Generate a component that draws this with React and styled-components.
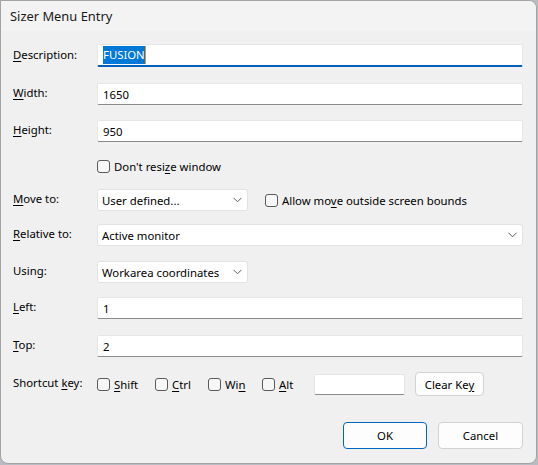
import React from "react";
import styled, { createGlobalStyle } from "styled-components";

const Global = createGlobalStyle`
  html, body { margin: 0; padding: 0; background: #b9bcc2; }
  body { font-family: "Noto Sans", "Liberation Sans", sans-serif; font-size: 11.35px; color: #000; }
`;

const Window = styled.div`
  width: 537px;
  height: 464px;
  box-sizing: border-box;
  border: 1px solid #a3a3a3;
  border-radius: 0 8px 8px 8px;
  background: #f0f0f0;
  overflow: hidden;
  display: flex;
  flex-direction: column;
`;

const TitleBar = styled.div`
  height: 30px;
  flex: none;
  background: #f3f3f3;
  display: flex;
  align-items: center;
  padding-left: 9px;
  font-size: 12.9px;
  color: #1a1a1a;
`;

const Body = styled.div`
  display: flex;
  flex-direction: column;
  padding: 0 13px 0 12px;
`;

const Row = styled.div`
  display: flex;
  align-items: center;
  margin-top: ${(p) => p.$mt}px;
  height: ${(p) => p.$h || 22}px;
`;

const Label = styled.div`
  width: 84px;
  flex: none;
  margin-bottom: 3px;
  white-space: nowrap;
`;

const Spacer = styled.div`
  width: 84px;
  flex: none;
`;

const U = styled.span`
  text-decoration: underline;
  text-underline-offset: 2px;
`;

const Input = styled.div`
  box-sizing: border-box;
  height: ${(p) => p.$h || 22}px;
  width: ${(p) => (p.$w ? `${p.$w}px` : "auto")};
  flex: ${(p) => (p.$w ? "none" : "1")};
  margin-left: ${(p) => p.$ml || 0}px;
  background: #fff;
  border: 1px solid #e6e6e6;
  border-bottom: ${(p) => (p.$focus ? "2px solid #005fb8" : "1px solid #8a8a8a")};
  border-radius: 2px;
  display: flex;
  align-items: center;
  padding-left: 5px;
  white-space: nowrap;
`;

const Selected = styled.span`
  background: #0078d7;
  color: #fff;
  padding: 1px 0 2px;
  border-right: 1px solid #ff8c00;
`;

const Select = styled.div`
  box-sizing: border-box;
  height: 22px;
  width: ${(p) => (p.$w ? `${p.$w}px` : "auto")};
  flex: ${(p) => (p.$w ? "none" : "1")};
  background: #fff;
  border: 1px solid #e2e2e2;
  border-radius: 3px;
  display: flex;
  align-items: center;
  justify-content: space-between;
  padding: 0 5px 0 4px;
  white-space: nowrap;
`;

const Chevron = () => (
  <svg width="9" height="6" viewBox="0 0 9 6">
    <path d="M0.5 0.8 L4.5 4.8 L8.5 0.8" fill="none" stroke="#5c5c5c" strokeWidth="1" />
  </svg>
);

const Check = styled.label`
  display: flex;
  align-items: center;
  gap: 4px;
  white-space: nowrap;
  flex: none;
  width: ${(p) => (p.$w ? `${p.$w}px` : "auto")};
  margin-left: ${(p) => p.$ml || 0}px;
`;

const Box = styled.span`
  box-sizing: border-box;
  width: 13px;
  height: 13px;
  border: 1px solid #5a5a5a;
  border-radius: 3px;
  background: #f7f7f7;
  flex: none;
`;

const Button = styled.div`
  box-sizing: border-box;
  height: ${(p) => p.$h || 27}px;
  width: ${(p) => p.$w}px;
  background: #fdfdfd;
  border: 1px solid ${(p) => (p.$default ? "#0067c0" : "#d2d2d2")};
  border-radius: 4px;
  display: flex;
  align-items: center;
  justify-content: center;
  margin-left: ${(p) => p.$ml || 0}px;
  white-space: nowrap;
`;

const Footer = styled.div`
  display: flex;
  justify-content: flex-end;
  margin-top: 26px;
`;

function App() {
  return (
    <>
      <Global />
      <Window>
        <TitleBar>Sizer Menu Entry</TitleBar>
        <Body>
          <Row $mt={13} $h={23}>
            <Label><U>D</U>escription:</Label>
            <Input $focus $h={23}><Selected>FUSION</Selected></Input>
          </Row>
          <Row $mt={16}>
            <Label><U>W</U>idth:</Label>
            <Input>1650</Input>
          </Row>
          <Row $mt={15}>
            <Label><U>H</U>eight:</Label>
            <Input>950</Input>
          </Row>
          <Row $mt={17} $h={15}>
            <Spacer />
            <Check><Box /><span>Don't resi<U>z</U>e window</span></Check>
          </Row>
          <Row $mt={15}>
            <Label><U>M</U>ove to:</Label>
            <Select $w={151}>User defined...<Chevron /></Select>
            <Check $ml={17}><Box /><span>Allow mo<U>v</U>e outside screen bounds</span></Check>
          </Row>
          <Row $mt={13}>
            <Label><U>R</U>elative to:</Label>
            <Select>Active monitor<Chevron /></Select>
          </Row>
          <Row $mt={15}>
            <Label>Using:</Label>
            <Select $w={151}>Workarea coordinates<Chevron /></Select>
          </Row>
          <Row $mt={14}>
            <Label><U>L</U>eft:</Label>
            <Input>1</Input>
          </Row>
          <Row $mt={16}>
            <Label><U>T</U>op:</Label>
            <Input>2</Input>
          </Row>
          <Row $mt={15} $h={24}>
            <Label>Shortcut <U>k</U>ey:</Label>
            <Check $w={58}><Box /><span><U>S</U>hift</span></Check>
            <Check $w={53}><Box /><span><U>C</U>trl</span></Check>
            <Check $w={54}><Box /><span>Wi<U>n</U></span></Check>
            <Check $w={52}><Box /><span><U>A</U>lt</span></Check>
            <Input $w={91} $h={21} />
            <Button $w={69} $h={24} $ml={10}>
              <span>Clear Ke<U>y</U></span>
            </Button>
          </Row>
          <Footer>
            <Button $w={84} $default>OK</Button>
            <Button $w={85} $ml={11}>Cancel</Button>
          </Footer>
        </Body>
      </Window>
    </>
  );
}

export default App;
